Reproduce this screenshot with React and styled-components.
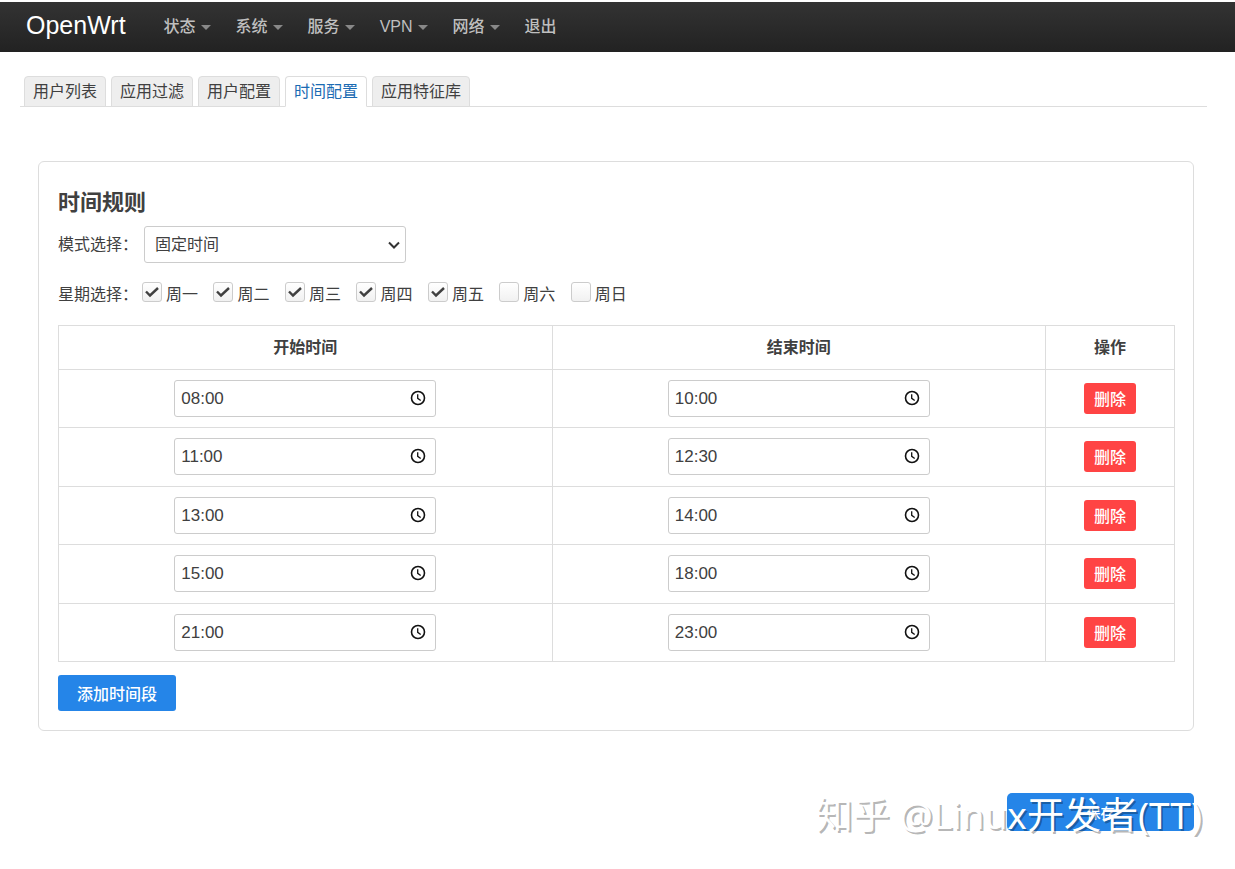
import React, { useState } from "react";
import styled, { createGlobalStyle } from "styled-components";

const GlobalStyle = createGlobalStyle`
  * {
    box-sizing: border-box;
  }
  body {
    margin: 0;
    background-color: #fff;
    color: #404040;
    font-family: "Liberation Sans", "Noto Sans CJK SC", sans-serif;
    font-size: 16px;
    line-height: 24px;
  }
  button,
  input,
  select {
    font-family: inherit;
    color: inherit;
  }
`;

const PageStyled = styled.div`
  padding-top: 2px;
`;

const Navbar = styled.header`
  height: 50px;
  padding: 0 26px;
  display: flex;
  align-items: center;
  background: linear-gradient(#333, #222);
`;

const Brand = styled.a`
  margin-right: 38px;
  color: #fff;
  font-size: 25px;
  line-height: 36px;
  padding-bottom: 4px;
  text-decoration: none;
`;

const Menu = styled.nav`
  display: flex;
  column-gap: 25px;
`;

const MenuLink = styled.a`
  display: flex;
  align-items: center;
  column-gap: 5px;
  color: #bfbfbf;
  font-weight: 500;
  text-decoration: none;
  &.has-menu::after {
    content: "";
    margin-top: 1px;
    border: 5px solid transparent;
    border-top-color: #888;
    border-bottom: 0;
  }
`;

const Content = styled.main`
  padding: 24px 28px 38px 20px;
`;

const Tabs = styled.nav`
  display: flex;
  column-gap: 5px;
  padding-left: 4px;
  border-bottom: 1px solid #ddd;
`;

const Tab = styled.a`
  height: 31px;
  margin-bottom: -1px;
  padding: 3px 8px;
  border: 1px solid #ddd;
  border-radius: 4px 4px 0 0;
  background-color: #eee;
  color: #404040;
  text-decoration: none;
  &.active {
    background-color: #fff;
    border-bottom-color: #fff;
    color: #1b6bb3;
  }
`;

const Card = styled.section`
  margin: 54px 13px 0 18px;
  padding: 25px 18px 19px 19px;
  border: 1px solid #ddd;
  border-radius: 6px;
`;

const Title = styled.h2`
  margin: 0 0 7px;
  font-size: 22px;
  line-height: 32px;
`;

const Field = styled.div`
  display: flex;
  align-items: center;
  column-gap: 6px;
`;

const FieldLabel = styled.label`
  width: 80px;
`;

const SelectBox = styled.div`
  position: relative;
  svg {
    position: absolute;
    top: 13px;
    right: 6px;
    pointer-events: none;
  }
`;

const Select = styled.select`
  display: block;
  width: 262px;
  height: 37px;
  padding: 0 10px;
  border: 1px solid #ccc;
  border-radius: 3px;
  background-color: #fff;
  font-size: 16px;
  appearance: none;
`;

const Week = styled.fieldset`
  margin: 18px 0;
  padding: 0;
  border: 0;
  display: flex;
  column-gap: 4px;
  height: 26px;
`;

const WeekTitle = styled.span`
  width: 80px;
  line-height: 28px;
`;

const Day = styled.label`
  display: inline-block;
  margin-right: 11px;
  line-height: 28px;
  input {
    appearance: none;
    width: 20px;
    height: 20px;
    margin: 1px 4px 0 0;
    vertical-align: top;
    border: 1px solid #ccc;
    border-radius: 3px;
    background: linear-gradient(#fff, #f1f1f1);
  }
  span {
    position: relative;
  }
  svg {
    position: absolute;
    top: -1px;
    left: -21px;
    pointer-events: none;
  }
`;

const Table = styled.table`
  width: 100%;
  table-layout: fixed;
  border-collapse: collapse;
  text-align: center;
  th,
  td {
    border: 1px solid #ddd;
    padding: 10px;
  }
  tr:nth-child(even) td {
    padding-bottom: 11px;
  }
  th {
    height: 44px;
    line-height: 23px;
  }
  th:last-child {
    width: 129px;
  }
`;

const TimeBox = styled.div`
  position: relative;
  width: 262px;
  margin: 0 auto;
  svg {
    position: absolute;
    top: 10px;
    right: 10px;
    pointer-events: none;
  }
`;

const TimeInput = styled.input`
  display: block;
  width: 100%;
  height: 37px;
  padding: 0 6px;
  border: 1px solid #ccc;
  border-radius: 3px;
  background-color: #fff;
  font-size: 17px;
`;

const Button = styled.button`
  height: 36px;
  padding: 0 19px;
  border: 0;
  border-radius: 3px;
  background-color: #2585e8;
  color: #fff;
  font-size: 16px;
  font-weight: 500;
  cursor: pointer;
`;

const AddButton = styled(Button)`
  display: block;
  margin-top: 13px;
`;

const DeleteButton = styled(Button)`
  display: block;
  height: 31px;
  margin: 0 auto;
  padding: 0 10px 2px;
  background-color: #ff4444;
`;

const Footer = styled.footer`
  position: relative;
  display: flex;
  justify-content: flex-end;
  margin: 62px 13px 0 0;
`;

const SaveButton = styled(Button)`
  width: 187px;
  height: 38px;
  border-radius: 5px;
  font-size: 14px;
`;

const Watermark = styled.div`
  position: absolute;
  top: -6px;
  right: -8px;
  color: #fff;
  font-family: "Noto Sans", "Noto Sans CJK SC", sans-serif;
  font-size: 37px;
  line-height: 56px;
  white-space: nowrap;
  text-shadow: 2px 2px 0 rgba(0, 0, 0, 0.3);
  pointer-events: none;
`;

const menus = [
  { name: "状态", sub: true },
  { name: "系统", sub: true },
  { name: "服务", sub: true },
  { name: "VPN", sub: true },
  { name: "网络", sub: true },
  { name: "退出", sub: false },
];

const tabs = ["用户列表", "应用过滤", "用户配置", "时间配置", "应用特征库"];

const dayNames = ["周一", "周二", "周三", "周四", "周五", "周六", "周日"];

function ClockIcon() {
  return (
    <svg width="16" height="16" viewBox="0 0 16 16" fill="none" stroke="#111">
      <circle cx="8" cy="8" r="6.5" strokeWidth="1.6" />
      <path d="M7.7 4.2V8.3L10.7 10.5" strokeWidth="1.3" />
    </svg>
  );
}

function TimeField({ value, label, onChange }) {
  return (
    <TimeBox>
      <TimeInput
        type="text"
        aria-label={label}
        value={value}
        onChange={(e) => onChange(e.target.value)}
      />
      <ClockIcon />
    </TimeBox>
  );
}

export default function App() {
  const [activeTab, setActiveTab] = useState("时间配置");
  const [days, setDays] = useState([0, 1, 2, 3, 4]);
  const [ranges, setRanges] = useState([
    { id: 1, start: "08:00", end: "10:00" },
    { id: 2, start: "11:00", end: "12:30" },
    { id: 3, start: "13:00", end: "14:00" },
    { id: 4, start: "15:00", end: "18:00" },
    { id: 5, start: "21:00", end: "23:00" },
  ]);

  const toggleDay = (day) => {
    setDays(
      days.includes(day) ? days.filter((d) => d !== day) : [...days, day]
    );
  };

  const updateRange = (id, key, value) => {
    setRanges(ranges.map((r) => (r.id === id ? { ...r, [key]: value } : r)));
  };

  const addRange = () => {
    setRanges([...ranges, { id: Date.now(), start: "00:00", end: "23:59" }]);
  };

  return (
    <PageStyled>
      <GlobalStyle />
      <Navbar>
        <Brand href="#">OpenWrt</Brand>
        <Menu>
          {menus.map((menu) => (
            <MenuLink
              key={menu.name}
              href="#"
              className={menu.sub ? "has-menu" : ""}
            >
              {menu.name}
            </MenuLink>
          ))}
        </Menu>
      </Navbar>

      <Content>
        <Tabs>
          {tabs.map((tab) => (
            <Tab
              key={tab}
              href="#"
              className={tab === activeTab ? "active" : ""}
              onClick={() => setActiveTab(tab)}
            >
              {tab}
            </Tab>
          ))}
        </Tabs>

        <Card>
          <Title>时间规则</Title>
          <Field>
            <FieldLabel htmlFor="mode">模式选择：</FieldLabel>
            <SelectBox>
              <Select id="mode" defaultValue="fixed">
                <option value="fixed">固定时间</option>
                <option value="dynamic">动态时间</option>
              </Select>
              <svg width="12" height="12" viewBox="0 0 12 12" fill="none">
                <path d="M1 3.5L6 8.5L11 3.5" stroke="#333" strokeWidth="2" />
              </svg>
            </SelectBox>
          </Field>

          <Week>
            <WeekTitle>星期选择：</WeekTitle>
            <div>
              {dayNames.map((name, i) => (
                <React.Fragment key={name}>
                  <Day>
                    <input
                      type="checkbox"
                      checked={days.includes(i)}
                      onChange={() => toggleDay(i)}
                    />
                    <span>
                      {days.includes(i) && (
                        <svg width="14" height="14" viewBox="0 0 14 14">
                          <path
                            d="M1 6.5L5 10.5L13 3"
                            fill="none"
                            stroke="#404040"
                            strokeWidth="2.4"
                          />
                        </svg>
                      )}
                      {name}
                    </span>
                  </Day>{" "}
                </React.Fragment>
              ))}
            </div>
          </Week>

          <Table>
            <thead>
              <tr>
                <th>开始时间</th>
                <th>结束时间</th>
                <th>操作</th>
              </tr>
            </thead>
            <tbody>
              {ranges.map((range) => (
                <tr key={range.id}>
                  <td>
                    <TimeField
                      label="开始时间"
                      value={range.start}
                      onChange={(v) => updateRange(range.id, "start", v)}
                    />
                  </td>
                  <td>
                    <TimeField
                      label="结束时间"
                      value={range.end}
                      onChange={(v) => updateRange(range.id, "end", v)}
                    />
                  </td>
                  <td>
                    <DeleteButton
                      type="button"
                      onClick={() =>
                        setRanges(ranges.filter((r) => r.id !== range.id))
                      }
                    >
                      删除
                    </DeleteButton>
                  </td>
                </tr>
              ))}
            </tbody>
          </Table>
          <AddButton type="button" onClick={addRange}>
            添加时间段
          </AddButton>
        </Card>

        <Footer>
          <SaveButton type="button">保存</SaveButton>
          <Watermark>知乎 @Linux开发者(TT)</Watermark>
        </Footer>
      </Content>
    </PageStyled>
  );
}
